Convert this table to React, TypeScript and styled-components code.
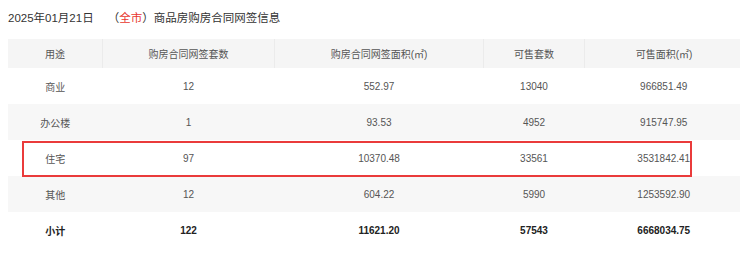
import React from 'react';
import styled, { createGlobalStyle } from 'styled-components';

const GlobalStyle = createGlobalStyle`
  html, body {
    margin: 0;
    padding: 0;
    background: #fff;
    overflow: hidden;
  }
  body {
    font-family: "Liberation Sans", "Noto Sans CJK SC", sans-serif;
  }
`;

const Page = styled.div`
  padding: 0 0 0 8px;
  width: 731px;
`;

const Title = styled.div`
  height: 39px;
  line-height: 36px;
  font-size: 11.5px;
  color: #333;
  white-space: nowrap;
`;

const City = styled.span`
  margin-left: 14px;
  .red {
    color: #e8372f;
  }
`;

const TableWrap = styled.div`
  position: relative;
  width: 731px;
`;

const Table = styled.table`
  width: 731px;
  table-layout: fixed;
  border-collapse: collapse;
  font-size: 10px;
  color: #555;
`;

const HeadCell = styled.th<{ $w: number }>`
  width: ${(p) => p.$w}px;
  height: 29px;
  padding: 0;
  background: #f5f5f5;
  border-right: 1px solid #ebebeb;
  font-weight: 400;
  color: #555;
  text-align: center;
  &:last-child {
    border-right: none;
  }
`;

const Row = styled.tr<{ $striped?: boolean; $total?: boolean }>`
  height: 36px;
  background: ${(p) => (p.$striped ? '#f7f7f7' : '#fff')};
  color: ${(p) => (p.$total ? '#222' : '#555')};
  font-weight: ${(p) => (p.$total ? 700 : 400)};
`;

const Cell = styled.td`
  padding: 0;
  text-align: center;
`;

const Highlight = styled.div`
  position: absolute;
  left: 14px;
  right: 47px;
  top: 102px;
  height: 36px;
  box-sizing: border-box;
  border: 2px solid #ea3b3b;
  pointer-events: none;
`;

const columns = [
  { label: '用途', w: 94 },
  { label: '购房合同网签套数', w: 171 },
  { label: '购房合同网签面积(㎡)', w: 208 },
  { label: '可售套数', w: 100 },
  { label: '可售面积(㎡)', w: 158 },
];

const rows = [
  ['商业', '12', '552.97', '13040', '966851.49'],
  ['办公楼', '1', '93.53', '4952', '915747.95'],
  ['住宅', '97', '10370.48', '33561', '3531842.41'],
  ['其他', '12', '604.22', '5990', '1253592.90'],
];

const total = ['小计', '122', '11621.20', '57543', '6668034.75'];

export default function App() {
  return (
    <Page>
      <GlobalStyle />
      <Title>
        2025年01月21日
        <City>
          （<span className='red'>全市</span>）
        </City>
        商品房购房合同网签信息
      </Title>
      <TableWrap>
        <Table>
          <thead>
            <tr>
              {columns.map((c) => (
                <HeadCell key={c.label} $w={c.w}>
                  {c.label}
                </HeadCell>
              ))}
            </tr>
          </thead>
          <tbody>
            {rows.map((r, i) => (
              <Row key={r[0]} $striped={i % 2 === 1}>
                {r.map((v, j) => (
                  <Cell key={j}>{v}</Cell>
                ))}
              </Row>
            ))}
            <Row $total>
              {total.map((v, j) => (
                <Cell key={j}>{v}</Cell>
              ))}
            </Row>
          </tbody>
        </Table>
        <Highlight />
      </TableWrap>
    </Page>
  );
}
